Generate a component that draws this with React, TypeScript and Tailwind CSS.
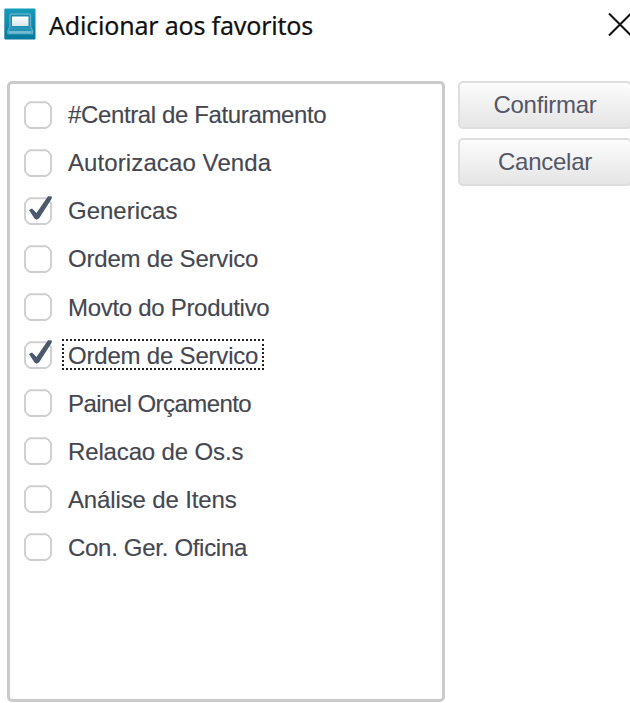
import React from "react";

type Item = { label: string; checked?: boolean; focused?: boolean; tracking: string };

const items: Item[] = [
  { label: "#Central de Faturamento", tracking: "tracking-[-0.37px]" },
  { label: "Autorizacao Venda", tracking: "tracking-[0.1px]" },
  { label: "Genericas", checked: true, tracking: "tracking-[0px]" },
  { label: "Ordem de Servico", tracking: "tracking-[-0.2px]" },
  { label: "Movto do Produtivo", tracking: "tracking-[-0.3px]" },
  { label: "Ordem de Servico", checked: true, focused: true, tracking: "tracking-[-0.2px]" },
  { label: "Painel Orçamento", tracking: "tracking-[-0.56px]" },
  { label: "Relacao de Os.s", tracking: "tracking-[-0.14px]" },
  { label: "Análise de Itens", tracking: "tracking-[-0.14px]" },
  { label: "Con. Ger. Oficina", tracking: "tracking-[-0.3px]" },
];

function AppIcon() {
  return (
    <svg width="32" height="32" viewBox="0 0 32 32" className="shrink-0">
      <defs>
        <linearGradient id="tile" x1="0" y1="0" x2="0" y2="1">
          <stop offset="0" stopColor="#179bbb" />
          <stop offset="1" stopColor="#08789d" />
        </linearGradient>
        <linearGradient id="screen" x1="0" y1="0" x2="0" y2="1">
          <stop offset="0" stopColor="#ffffff" />
          <stop offset="1" stopColor="#d9e6ec" />
        </linearGradient>
      </defs>
      <rect x="0.3" y="0.5" width="31.2" height="31" rx="1" fill="url(#tile)" />
      <path d="M7.5 6h17.5q1.5 0 1.5 1.5v11l2 4.5v2.5H4V23l2-4.500v-11q0-1.500 1.500-1.500z" fill="#168bb0" stroke="#5fb0c9" strokeWidth="1.4" strokeLinejoin="round" />
      <rect x="8" y="8.500" width="16.500" height="9.500" fill="url(#screen)" />
      <path d="M6.500 18.500h19.500l1.500 4H5z" fill="#2795b7" />
      <path d="M5 23h22.500v2.300H5z" fill="#72bad0" />
    </svg>
  );
}

function CheckBox({ checked }: { checked?: boolean }) {
  return (
    <svg width="30" height="32" viewBox="0 0 30 32" className="shrink-0">
      <path d="M7 3.200H23L25.500 4.700L28 8.200V24L25.500 27.500L23 29H7L4.500 27.500L2 24V8.200L4.500 4.700Z" fill="#fff" stroke="#cfcfcf" strokeWidth="1.9" strokeLinejoin="round" />
      {checked && <path d="M6 15L9 13.500L13.500 18L25 1.200L29 1.500L28.500 4L16 23.500L13.500 24.800L11.500 23.500Z" fill="#4a586b" />}
    </svg>
  );
}

function Button({ children, className }: { children: React.ReactNode; className: string }) {
  return (
    <button className="flex h-[48px] w-[174px] items-center justify-center rounded-[5px] border-2 border-[#dedede] bg-linear-to-b from-[#fcfcfc] to-[#e5e5e5] text-[24px] leading-none text-[#555766]">
      <span className={className}>{children}</span>
    </button>
  );
}

export default function App() {
  return (
    <div className="h-[703px] w-[630px] overflow-hidden bg-white font-['Liberation_Sans',Arial,sans-serif]">
      <header className="flex h-[81px] items-start pl-[4px]">
        <div className="mt-[8px] flex">
          <AppIcon />
        </div>
        <h1 className="mt-[8px] ml-[13px] font-['Noto_Sans',sans-serif] text-[25px] leading-[34px] tracking-[-0.2px] whitespace-nowrap text-[#111] [-webkit-text-stroke:0.2px_#111]">
          Adicionar aos favoritos
        </h1>
        <svg width="24" height="26" viewBox="0 0 24 26" className="mt-[11px] ml-auto -mr-[2px] shrink-0">
          <path d="M1 2.500L23 24.500M23 2.500L1 24.500" stroke="#111" strokeWidth="2" fill="none" />
        </svg>
      </header>
      <main className="flex items-start pl-[7px]">
        <ul className="h-[621px] w-[438px] shrink-0 rounded-[5px] border-[3px] border-[#cbcbcb] pt-[6.6px] pl-[13px]">
          {items.map((item, i) => (
            <li key={i} className="flex h-[48.1px] items-center">
              <CheckBox checked={item.checked} />
              <span
                className={
                  "mb-px ml-[9px] flex h-[31px] items-center border-2 pt-[2px] pr-[4px] pl-[4px] text-[24px] leading-none whitespace-nowrap text-[#444650] [-webkit-text-stroke:0.15px_#444650] " +
                  (item.focused ? "border-dotted border-[#222] " : "border-transparent ") +
                  item.tracking
                }
              >
                {item.label}
              </span>
            </li>
          ))}
        </ul>
        <div className="ml-[13px] flex shrink-0 flex-col gap-[9px]">
          <Button className="tracking-[-0.25px]">Confirmar</Button>
          <Button className="tracking-[-0.25px]">Cancelar</Button>
        </div>
      </main>
    </div>
  );
}
